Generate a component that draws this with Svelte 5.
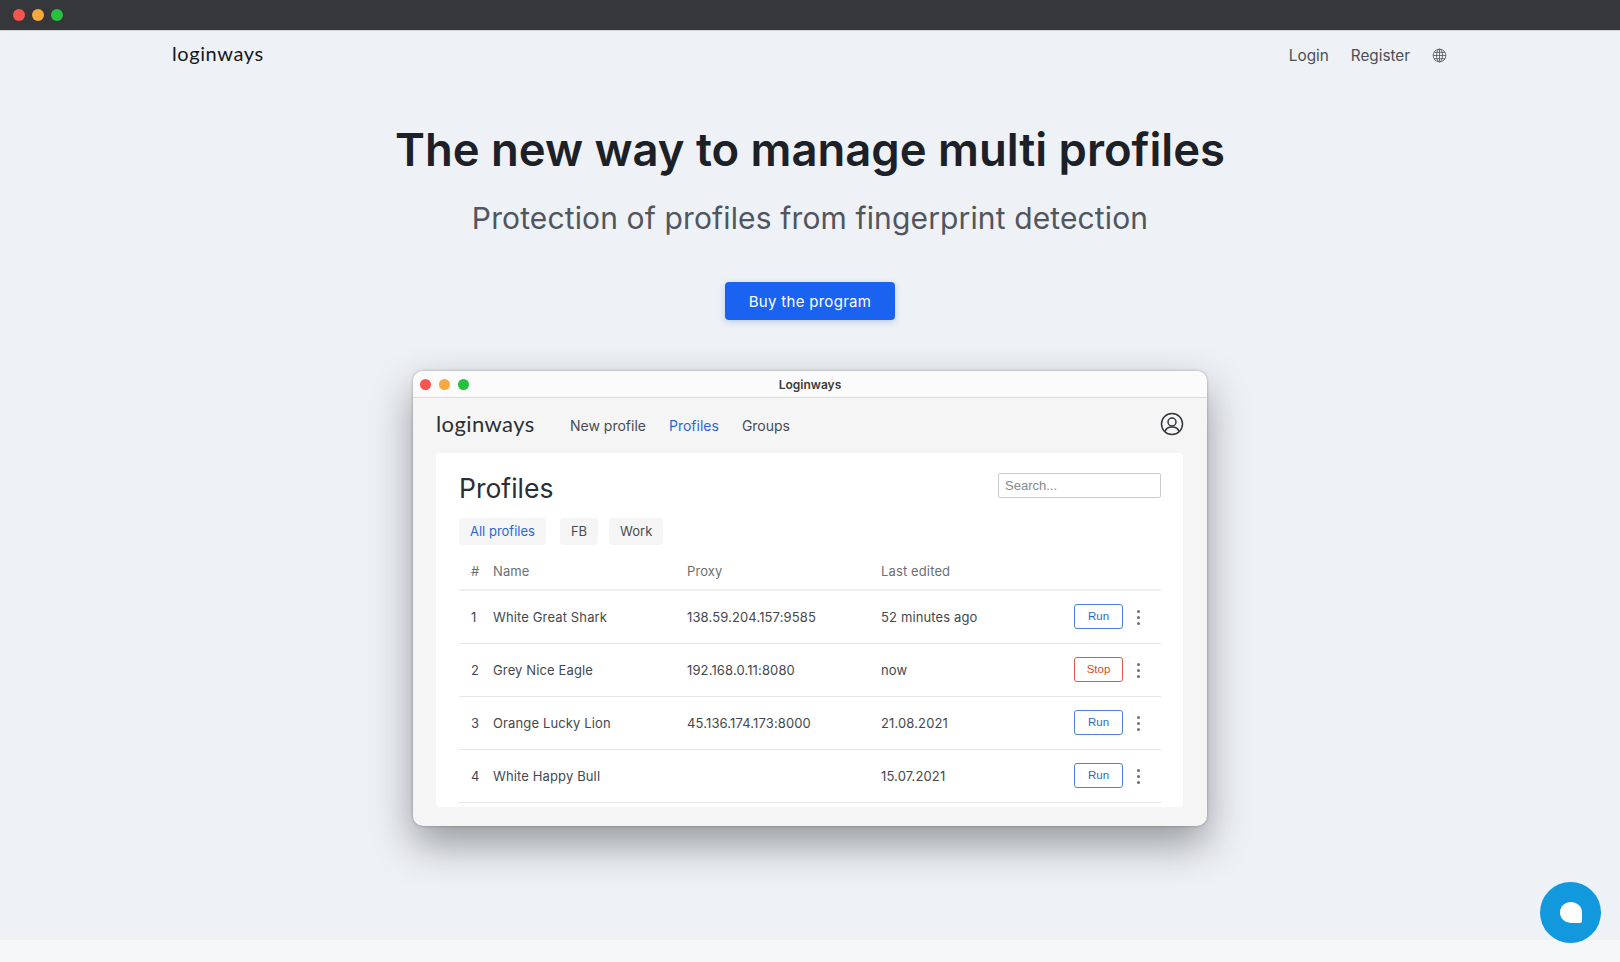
<script>
	const rows = [
		{ n: 1, name: 'White Great Shark', proxy: '138.59.204.157:9585', edited: '52 minutes ago', action: 'Run' },
		{ n: 2, name: 'Grey Nice Eagle', proxy: '192.168.0.11:8080', edited: 'now', action: 'Stop' },
		{ n: 3, name: 'Orange Lucky Lion', proxy: '45.136.174.173:8000', edited: '21.08.2021', action: 'Run' },
		{ n: 4, name: 'White Happy Bull', proxy: '', edited: '15.07.2021', action: 'Run' }
	];
</script>

<div class="page">
	<div class="chrome">
		<span class="dot red"></span><span class="dot yellow"></span><span class="dot green"></span>
	</div>

	<header class="topnav">
		<div class="logo">loginways</div>
		<nav>
			<a href="#login">Login</a>
			<a href="#register">Register</a>
			<svg class="globe" viewBox="0 0 16 16" fill="none" stroke="#555b63" stroke-width="0.9">
				<circle cx="8" cy="8" r="6.8" />
				<ellipse cx="8" cy="8" rx="3.2" ry="6.8" />
				<path d="M8 1.2v13.6M1.2 8h13.6M2.2 4.6h11.6M2.2 11.4h11.6" />
			</svg>
		</nav>
	</header>

	<section class="hero">
		<h1>The new way to manage multi profiles</h1>
		<p>Protection of profiles from fingerprint detection</p>
		<button class="buy">Buy the program</button>
	</section>

	<div class="window">
		<div class="titlebar">
			<span class="dot red small"></span><span class="dot yellow small"></span><span class="dot green small"></span>
			<span class="title">Loginways</span>
		</div>
		<div class="appbody">
			<div class="appnav">
				<div class="applogo">loginways</div>
				<a href="#new">New profile</a>
				<a href="#profiles" class="active">Profiles</a>
				<a href="#groups">Groups</a>
				<svg class="user" viewBox="0 0 24 24" fill="none" stroke="#33363a" stroke-width="1.5">
					<circle cx="12" cy="12" r="10.5" />
					<circle cx="12" cy="10" r="4" />
					<path d="M5 19.5c1-3.4 3.600-4.500 7-4.500s6 1.100 7 4.500" />
				</svg>
			</div>
			<div class="card">
				<div class="cardhead">
					<h2>Profiles</h2>
					<input placeholder="Search..." />
				</div>
				<div class="chips">
					<span class="chip active">All profiles</span>
					<span class="chip fb">FB</span>
					<span class="chip">Work</span>
				</div>
				<div class="row head">
					<span class="num">#</span><span>Name</span><span>Proxy</span><span>Last edited</span>
				</div>
				{#each rows as r}
					<div class="row">
						<span class="num">{r.n}</span>
						<span>{r.name}</span>
						<span>{r.proxy}</span>
						<span>{r.edited}</span>
						<button class="action" class:stop={r.action === 'Stop'}>{r.action}</button>
						<span class="more"><i></i><i></i><i></i></span>
					</div>
				{/each}
			</div>
		</div>
	</div>

	<div class="footer"></div>

	<div class="chat"><span class="bubble"></span></div>
</div>

<style>
	:global(body) {
		margin: 0;
		background: #eef1f5;
	}
	.page {
		height: 962px;
		display: flex;
		flex-direction: column;
		position: relative;
		overflow: hidden;
		background: #eef1f5;
		font-family: Inter, "Noto Sans", sans-serif;
		color: #3f4349;
	}
	.chrome {
		height: 31px;
		flex: none;
		background: #36373a;
		border-bottom: 1px solid #d5d6d8;
		box-sizing: border-box;
		display: flex;
		align-items: center;
		gap: 7px;
		padding-left: 13px;
	}
	.dot {
		width: 12px;
		height: 12px;
		border-radius: 50%;
	}
	.red {
		background: #f6544f;
	}
	.yellow {
		background: #f9a83e;
	}
	.green {
		background: #27c13f;
	}
	.topnav {
		height: 48px;
		flex: none;
		display: flex;
		align-items: center;
		justify-content: space-between;
		padding: 0 173px 0 172px;
	}
	.logo {
		font-family: Lato, sans-serif;
		font-size: 20px;
		color: #16181c;
		letter-spacing: 0.6px;
		margin-top: -5px;
	}
	.topnav nav {
		display: flex;
		align-items: center;
		gap: 22px;
		font-size: 15.3px;
	}
	.topnav a {
		color: #4a4f56;
		text-decoration: none;
	}
	.globe {
		width: 15px;
		height: 15px;
	}
	.hero {
		text-align: center;
		flex: none;
	}
	h1 {
		margin: 43px 0 0;
		font-size: 45.4px;
		line-height: 56px;
		font-weight: 600;
		color: #1c2027;
	}
	.hero p {
		margin: 21px 0 0;
		font-size: 30px;
		line-height: 38px;
		color: #51565e;
		letter-spacing: 0.13px;
	}
	.buy {
		margin-top: 45px;
		width: 170px;
		height: 38px;
		border: 0;
		border-radius: 4px;
		background: #1a62f0;
		color: #fff;
		font: 400 15px Inter, sans-serif;
		letter-spacing: 0.3px;
		box-shadow: 0 2px 6px rgba(26, 98, 240, 0.25);
	}
	.window {
		width: 794px;
		height: 455px;
		margin: 51px auto 0;
		flex: none;
		border-radius: 10px;
		overflow: hidden;
		background: #f5f5f6;
		box-shadow: 0 0 3px rgba(0, 0, 0, 0.3), 0 18px 40px rgba(40, 45, 50, 0.45);
	}
	.titlebar {
		height: 27px;
		box-sizing: border-box;
		background: #fbfbfb;
		border-bottom: 1px solid #dcdcdd;
		display: flex;
		align-items: center;
		gap: 8px;
		padding-left: 7px;
		position: relative;
	}
	.dot.small {
		width: 11px;
		height: 11px;
	}
	.title {
		position: absolute;
		left: 0;
		right: 0;
		text-align: center;
		font-size: 12px;
		font-weight: 600;
		color: #3a3c40;
	}
	.appbody {
		padding: 0 24px 0 23px;
	}
	.appnav {
		height: 55px;
		display: flex;
		align-items: center;
		font-size: 14px;
	}
	.applogo {
		font-family: Lato, sans-serif;
		font-size: 22px;
		letter-spacing: 0.4px;
		color: #2c2f33;
		width: 134px;
		margin-top: -4px;
	}
	.appnav a {
		color: #484c52;
		text-decoration: none;
		margin-right: 23px;
	}
	.appnav a.active,
	.chip.active {
		color: #2a68cf;
	}
	.user {
		width: 24px;
		height: 24px;
		margin-left: auto;
		margin-top: -3px;
		margin-right: -1px;
	}
	.card {
		height: 354px;
		box-sizing: border-box;
		background: #fff;
		border-radius: 4px;
		padding: 20px 22px 0 23px;
	}
	.cardhead {
		display: flex;
		justify-content: space-between;
		align-items: flex-start;
		height: 45px;
	}
	h2 {
		margin: 0;
		font-size: 26.5px;
		line-height: 30px;
		font-weight: 400;
		color: #2b2e33;
	}
	input {
		width: 163px;
		height: 25px;
		box-sizing: border-box;
		border: 1px solid #c9cbce;
		border-radius: 2px;
		padding: 0 6px;
		font: 13px "Liberation Sans", sans-serif;
	}
	input::placeholder {
		color: #85888d;
	}
	.chips {
		display: flex;
		gap: 11px;
		font-size: 13px;
		margin-bottom: 14px;
	}
	.chip {
		height: 27px;
		line-height: 27px;
		padding: 0 11px;
		border-radius: 4px;
		background: #f5f5f6;
		color: #484c52;
	}
	.chip.active {
		margin-right: 3px;
	}
	.row {
		height: 53px;
		box-sizing: border-box;
		display: grid;
		grid-template-columns: 34px 194px 194px 193px 49px 15px;
		align-items: center;
		border-bottom: 1px solid #e6e6e8;
		font-size: 13px;
		letter-spacing: 0.13px;
		color: #44484e;
	}
	.row.head {
		height: 32px;
		color: #6b6f75;
		border-bottom: 2px solid #f0f0f1;
		padding-bottom: 6px;
	}
	.num {
		padding-left: 12px;
	}
	.action {
		width: 49px;
		height: 25px;
		padding: 0;
		border: 1px solid #4e82d6;
		border-radius: 3px;
		background: #fff;
		color: #2a68cf;
		font: 11.5px "Liberation Sans", sans-serif;
		margin-top: -2px;
	}
	.action.stop {
		border-color: #dd5a48;
		color: #dc4a2c;
	}
	.more {
		display: flex;
		flex-direction: column;
		align-items: flex-end;
		gap: 3px;
		margin-right: -2px;
	}
	.more i {
		width: 3px;
		height: 3px;
		border-radius: 50%;
		background: #6b6f75;
	}
	.footer {
		margin-top: auto;
		height: 22px;
		background: #f6f7f8;
	}
	.chat {
		position: absolute;
		left: 1540px;
		top: 882px;
		width: 61px;
		height: 61px;
		border-radius: 50%;
		background: #1298dc;
		display: flex;
		align-items: center;
		justify-content: center;
	}
	.bubble {
		width: 22px;
		height: 21px;
		background: #fff;
		border-radius: 50% 50% 2px 50%;
	}
</style>
